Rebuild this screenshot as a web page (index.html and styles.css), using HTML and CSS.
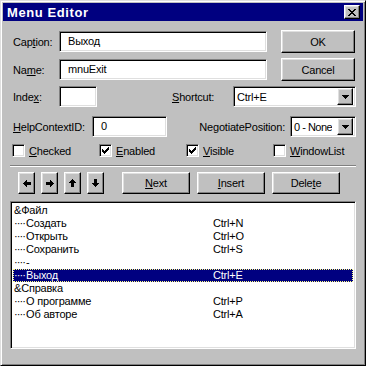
FILE: index.html
```html
<!DOCTYPE html>
<html lang="ru">
<head>
    <meta charset="UTF-8">
    <title>Menu Editor</title>
    <link rel="stylesheet" href="styles.css">
</head>
<body>
<div class="window">
    <div class="titlebar">
        <span class="title">Menu Editor</span>
        <button class="btn close-btn">
            <svg width="8" height="7" viewBox="0 0 8 7" shape-rendering="crispEdges">
                <path d="M0 0h2v1h1v1h2v-1h1v-1h2v1h-1v1h-1v1h-1v1h1v1h1v1h1v1h-2v-1h-1v-1h-2v1h-1v1h-2v-1h1v-1h1v-1h1v-1h-1v-1h-1v-1h-1z"/>
            </svg>
        </button>
    </div>

    <div class="content">
        <div class="row row-top">
            <span class="lbl lbl-short">Cap<u>t</u>ion:</span>
            <div class="field field-long">Выход</div>
            <button class="btn side-btn">OK</button>
        </div>
        <div class="row row-top row-name">
            <span class="lbl lbl-short">Na<u>m</u>e:</span>
            <div class="field field-long">mnuExit</div>
            <button class="btn side-btn">Cancel</button>
        </div>

        <div class="row row-mid row-index">
            <span class="lbl lbl-short">Inde<u>x</u>:</span>
            <div class="field field-index"></div>
            <span class="lbl lbl-shortcut"><u>S</u>hortcut:</span>
            <div class="field combo combo-shortcut">
                <span class="combo-text">Ctrl+E</span>
                <span class="btn drop-btn">
                    <svg width="7" height="4" viewBox="0 0 7 4" shape-rendering="crispEdges"><path d="M0 0h7v1h-1v1h-1v1h-1v1h-1v-1h-1v-1h-1v-1h-1z"/></svg>
                </span>
            </div>
        </div>

        <div class="row row-mid row-help">
            <span class="lbl lbl-help"><u>H</u>elpContextID:</span>
            <div class="field field-help">0</div>
            <span class="lbl lbl-negotiate">Ne<u>g</u>otiatePosition:</span>
            <div class="field combo combo-negotiate">
                <span class="combo-text">0 - None</span>
                <span class="btn drop-btn">
                    <svg width="7" height="4" viewBox="0 0 7 4" shape-rendering="crispEdges"><path d="M0 0h7v1h-1v1h-1v1h-1v1h-1v-1h-1v-1h-1v-1h-1z"/></svg>
                </span>
            </div>
        </div>

        <div class="checks">
            <div class="check-item"><span class="check"></span><span><u>C</u>hecked</span></div>
            <div class="check-item">
                <span class="check">
                    <svg width="7" height="7" viewBox="0 0 7 7" shape-rendering="crispEdges"><path d="M6 0h1v3h-1v1h-1v1h-1v1h-1v1h-1v-1h-1v-1h-1v-3h1v1h1v1h1v-1h1v-1h1v-1h1z"/></svg>
                </span>
                <span><u>E</u>nabled</span>
            </div>
            <div class="check-item">
                <span class="check">
                    <svg width="7" height="7" viewBox="0 0 7 7" shape-rendering="crispEdges"><path d="M6 0h1v3h-1v1h-1v1h-1v1h-1v1h-1v-1h-1v-1h-1v-3h1v1h1v1h1v-1h1v-1h1v-1h1z"/></svg>
                </span>
                <span><u>V</u>isible</span>
            </div>
            <div class="check-item"><span class="check"></span><span><u>W</u>indowList</span></div>
        </div>

        <div class="separator"></div>

        <div class="toolbar">
            <div class="arrows">
                <button class="btn arrow-btn">
                    <svg width="8" height="7" viewBox="0 0 8 7" shape-rendering="crispEdges"><path d="M0 3.5L4 0v2h4v3h-4v2z"/></svg>
                </button>
                <button class="btn arrow-btn">
                    <svg width="8" height="7" viewBox="0 0 8 7" shape-rendering="crispEdges"><path d="M8 3.5L4 0v2h-4v3h4v2z"/></svg>
                </button>
                <button class="btn arrow-btn">
                    <svg width="7" height="8" viewBox="0 0 7 8" shape-rendering="crispEdges"><path d="M3.5 0L7 4h-2v4h-3v-4h-2z"/></svg>
                </button>
                <button class="btn arrow-btn">
                    <svg width="7" height="8" viewBox="0 0 7 8" shape-rendering="crispEdges"><path d="M3.5 8L7 4h-2v-4h-3v4h-2z"/></svg>
                </button>
            </div>
            <button class="btn action-btn"><u>N</u>ext</button>
            <button class="btn action-btn"><u>I</u>nsert</button>
            <button class="btn action-btn">Dele<u>t</u>e</button>
        </div>

        <div class="field listbox">
            <div class="item"><span class="cap">&amp;Файл</span></div>
            <div class="item"><span class="cap"><span class="dots">····</span>Создать</span><span>Ctrl+N</span></div>
            <div class="item"><span class="cap"><span class="dots">····</span>Открыть</span><span>Ctrl+O</span></div>
            <div class="item"><span class="cap"><span class="dots">····</span>Сохранить</span><span>Ctrl+S</span></div>
            <div class="item"><span class="cap"><span class="dots">····</span>-</span></div>
            <div class="item selected"><span class="cap"><span class="dots">····</span>Выход</span><span>Ctrl+E</span></div>
            <div class="item"><span class="cap">&amp;Справка</span></div>
            <div class="item"><span class="cap"><span class="dots">····</span>О программе</span><span>Ctrl+P</span></div>
            <div class="item"><span class="cap"><span class="dots">····</span>Об авторе</span><span>Ctrl+A</span></div>
        </div>
    </div>
</div>
</body>
</html>
```

FILE: styles.css
```css
* {
    margin: 0;
    padding: 0;
    box-sizing: border-box;
}

body {
    background-color: #c0c0c0;
    font-family: "Liberation Sans", Arial, sans-serif;
    font-size: 11px;
    letter-spacing: -0.2px;
    color: #000;
}

.window {
    width: 366px;
    height: 366px;
    padding: 2px;
    background-color: #c0c0c0;
    border: 1px solid;
    border-color: #dfdfdf #000 #000 #dfdfdf;
    box-shadow: inset 1px 1px #fff, inset -1px -1px #808080;
    display: flex;
    flex-direction: column;
}

/* title bar */
.titlebar {
    height: 18px;
    padding: 0 3px 0 4px;
    background-color: #000080;
    color: #fff;
    display: flex;
    align-items: center;
    justify-content: space-between;
}

.title {
    font-size: 13px;
    font-weight: bold;
    letter-spacing: 0.6px;
}

/* raised 3d button */
.btn {
    background-color: #c0c0c0;
    border: 1px solid;
    border-color: #fff #000 #000 #fff;
    box-shadow: inset -1px -1px #808080, inset 1px 1px #dfdfdf;
    font-family: inherit;
    font-size: 11px;
    letter-spacing: inherit;
    color: #000;
    display: flex;
    align-items: center;
    justify-content: center;
}

.close-btn {
    width: 16px;
    height: 14px;
}

/* sunken field */
.field {
    background-color: #fff;
    border: 1px solid;
    border-color: #808080 #fff #fff #808080;
    box-shadow: inset 1px 1px #000, inset -1px -1px #dfdfdf;
}

.content {
    padding: 9px 7px 0 7px;
}

.row {
    display: flex;
    align-items: center;
}

.lbl {
    padding-left: 3px;
    white-space: nowrap;
}

.row-top {
    height: 23px;
}

.row-name {
    margin-top: 5px;
}

.lbl-short {
    width: 49px;
}

.field-long {
    width: 208px;
    height: 21px;
    padding-left: 8px;
    line-height: 19px;
}

.side-btn {
    width: 74px;
    height: 23px;
    margin-left: 14px;
}

.row-mid {
    height: 21px;
}

.row-index {
    margin-top: 5px;
}

.row-help {
    margin-top: 9px;
}

.field-index {
    width: 38px;
    height: 21px;
}

.lbl-shortcut {
    width: 61px;
    margin-left: 75px;
    padding-left: 0;
}

.combo {
    height: 21px;
    padding: 2px;
    display: flex;
    align-items: center;
    justify-content: space-between;
}

.combo-text {
    padding-left: 1px;
    overflow: hidden;
    white-space: nowrap;
}

.combo-shortcut {
    width: 123px;
}

.drop-btn {
    width: 16px;
    height: 17px;
    flex-shrink: 0;
}

.lbl-help {
    width: 82px;
}

.field-help {
    width: 75px;
    height: 21px;
    padding-left: 8px;
    line-height: 19px;
}

.lbl-negotiate {
    flex: 1;
    text-align: right;
    padding-right: 5px;
}

.combo-negotiate {
    width: 66px;
}

.combo-negotiate .combo-text {
    letter-spacing: -0.5px;
}

/* checkboxes */
.checks {
    margin-top: 7px;
    padding-left: 2px;
    display: grid;
    grid-template-columns: repeat(4, 87px);
    height: 13px;
}

.check-item {
    display: flex;
    align-items: center;
    gap: 4px;
}

.check {
    width: 13px;
    height: 13px;
    background-color: #fff;
    border: 1px solid;
    border-color: #808080 #fff #fff #808080;
    box-shadow: inset 1px 1px #000, inset -1px -1px #dfdfdf;
    display: flex;
    align-items: center;
    justify-content: center;
}

.separator {
    margin-top: 8px;
    height: 2px;
    border-top: 1px solid #808080;
    border-bottom: 1px solid #fff;
}

/* arrows + Next / Insert / Delete */
.toolbar {
    margin-top: 5px;
    height: 22px;
    display: flex;
    gap: 7px;
}

.arrows {
    padding-left: 8px;
    margin-right: 11px;
    display: flex;
    gap: 6px;
}

.arrow-btn {
    width: 17px;
    height: 22px;
}

.action-btn {
    width: 68px;
    height: 22px;
}

/* menu list */
.listbox {
    margin-top: 7px;
    width: 346px;
    height: 148px;
    padding: 2px;
}

.item {
    display: flex;
    height: 13px;
    line-height: 13px;
    padding-left: 1px;
    white-space: nowrap;
}

.cap {
    width: 199px;
}

.dots {
    letter-spacing: -0.9px;
    margin-right: 1px;
}

.item.selected {
    background-color: #000080;
    color: #fff;
    outline: 1px dotted #ffff80;
    outline-offset: -1px;
}
```
